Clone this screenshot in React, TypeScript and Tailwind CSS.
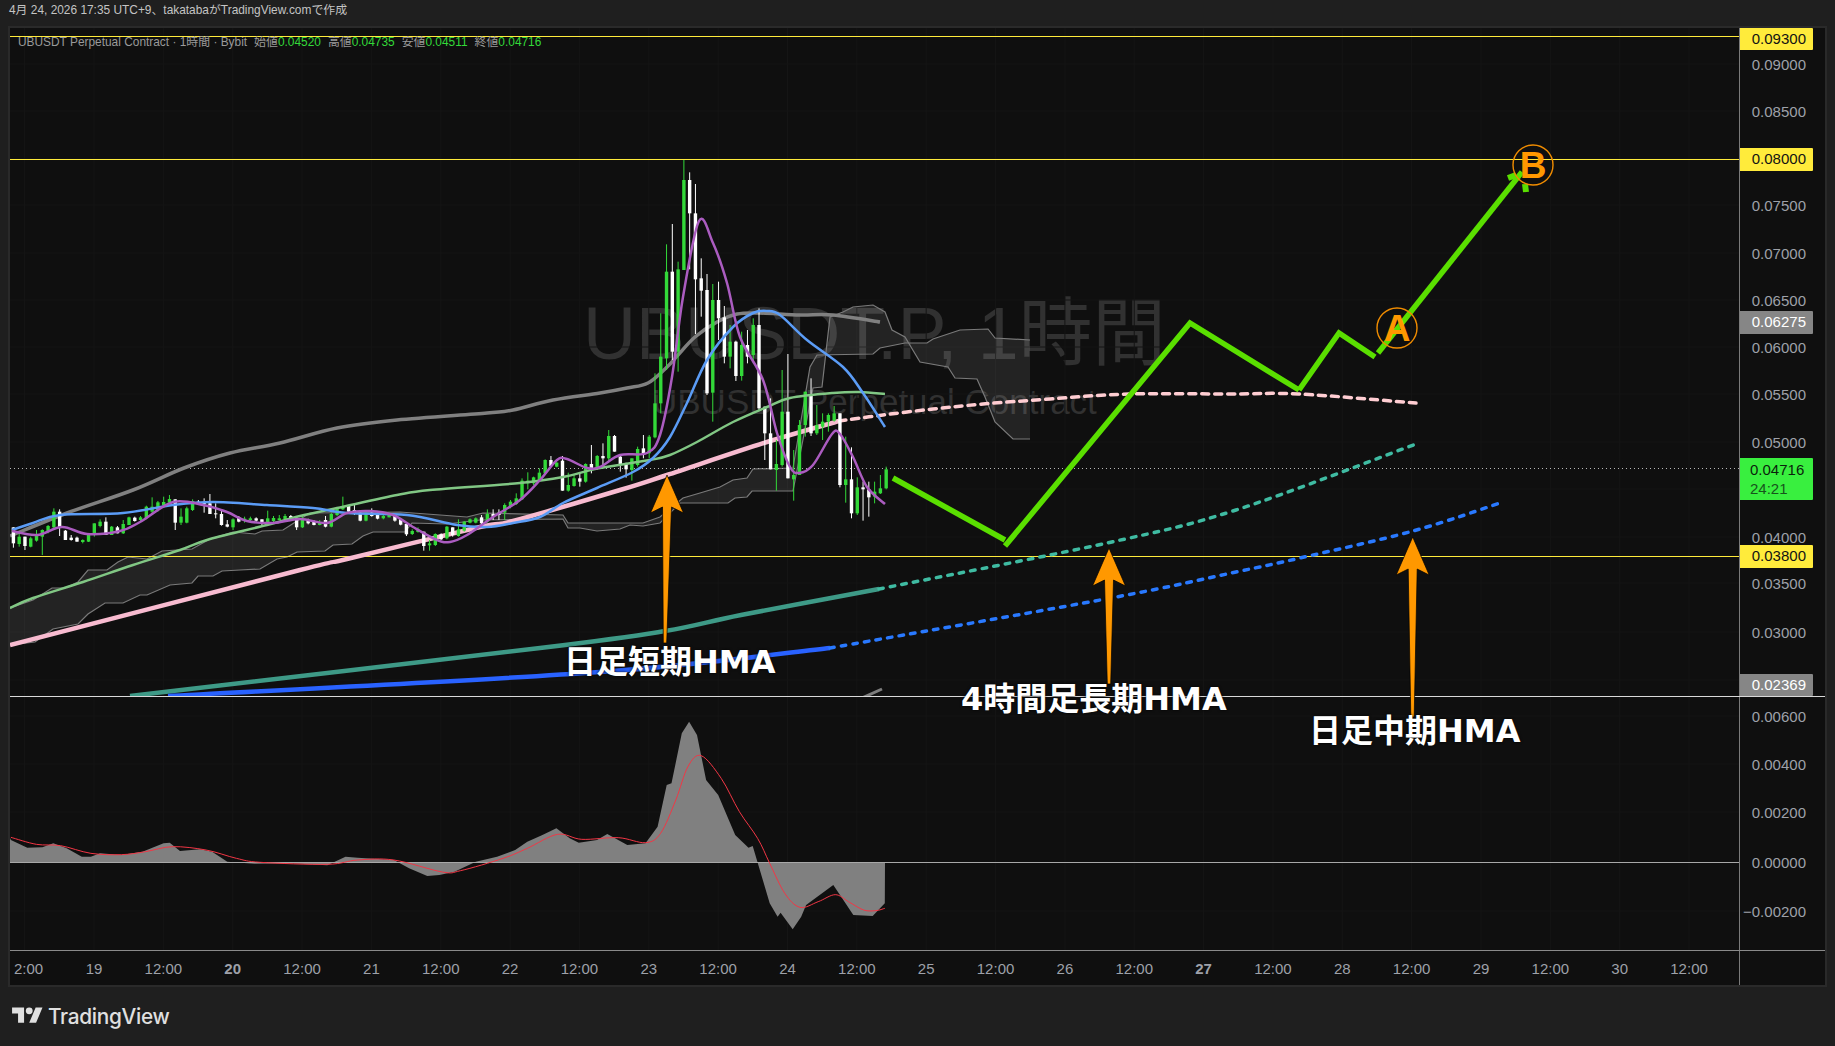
const sans = "font-['Liberation_Sans','Noto_Sans_CJK_JP',sans-serif]";
const note = "pointer-events-none absolute whitespace-nowrap font-['DejaVu_Sans','Noto_Sans_CJK_JP',sans-serif] text-[32px] font-bold leading-[44px] text-white [text-shadow:0_0_3px_#000]";

type P = [number, number];
const pts = (a: P[]) => a.map((p) => p.join(",")).join(" ");
const smooth = (a: P[]) => {
  let d = `M${a[0][0]} ${a[0][1]}`;
  for (let i = 0; i < a.length - 1; i++) {
    const p0 = a[Math.max(i - 1, 0)];
    const p1 = a[i];
    const p2 = a[i + 1];
    const p3 = a[Math.min(i + 2, a.length - 1)];
    const c1x = p1[0] + (p2[0] - p0[0]) / 6;
    const c1y = p1[1] + (p2[1] - p0[1]) / 6;
    const c2x = p2[0] - (p3[0] - p1[0]) / 6;
    const c2y = p2[1] - (p3[1] - p1[1]) / 6;
    d += `C${c1x.toFixed(1)} ${c1y.toFixed(1)} ${c2x.toFixed(1)} ${c2y.toFixed(1)} ${p2[0]} ${p2[1]}`;
  }
  return d;
};

// candles: up(1)/down(0), body top, body bottom, wick top, wick bottom
const c1: number[][] = [
[0,262,310,262,323],[1,290,312,280,320],[0,290,318,290,330],[1,295,320,290,322],[1,287,302,270,305],[1,270,290,268,345],[1,258,275,255,280],[1,215,262,205,265],[0,215,262,208,288],[0,272,300,270,300],
[0,293,300,285,302],[0,293,305,290,305],[1,300,306,298,310],[1,285,305,283,306],[1,250,285,250,290],[1,245,258,238,262],[0,245,285,232,285],[1,260,285,258,285],[0,262,280,258,280],[1,252,280,240,282],
[1,232,255,230,255],[0,233,243,230,245],[1,232,240,228,245],[1,200,235,197,238],[1,200,215,172,220],[1,187,210,183,215],[1,186,195,170,198],[1,177,188,165,190],[0,178,248,178,270],[1,230,248,205,255],
[1,205,248,200,250],[1,183,210,178,213],[0,185,193,180,195],[0,188,193,175,218],[0,190,222,162,222],[0,220,222,190,235],[0,222,255,210,257],[0,253,260,240,262],[1,238,262,235,270],[0,232,245,228,247],
[1,236,240,230,248],[1,235,240,230,245],[0,235,242,232,245],[0,238,252,238,260],[1,235,248,212,250],[1,234,243,228,248],[1,235,240,225,240],[1,228,237,222,240],[0,228,235,225,238],[0,234,262,228,270],
[1,240,262,228,264],[0,240,250,236,253],[0,245,255,240,256],[1,248,255,240,256],[0,240,260,228,262],[1,222,260,218,262],[1,205,225,203,228],[1,200,208,170,210],[0,198,215,195,222],[0,210,222,195,225],
[0,218,242,212,244],[1,218,242,216,244],[0,218,228,205,230],[0,225,236,218,238],[1,228,235,220,238],[1,222,232,218,232],[0,225,242,222,245],[0,237,254,235,256],[0,252,283,250,288],[1,273,282,268,285],
[1,268,276,262,278],[0,275,318,275,332],[1,310,316,300,332],[1,282,315,280,318],[0,283,298,280,300],[1,260,295,258,298],[0,262,285,262,290],[1,268,288,238,290],[1,245,272,243,275],[1,238,248,235,250],
[1,235,248,232,250],[0,232,250,225,255],[1,222,245,208,248],[0,222,230,208,240],[0,218,225,208,240],[1,195,218,190,240],[1,185,200,180,205],[1,175,192,160,195],[1,122,178,115,180],[1,122,130,97,148],
[1,112,130,110,135],[1,98,120,85,122],[1,60,100,58,102],[0,60,78,48,80],[1,68,80,65,82],[0,62,152,48,152],[1,135,152,98,155],[1,115,138,105,140],[0,115,125,100,140],[1,72,125,70,128],
[0,72,85,15,100],[1,48,85,45,90],
];
const c2: number[][] = [
[0,918,925,880,955],[1,858,925,840,935],[0,858,905,855,905],[0,920,945,918,965],[0,940,958,938,983],[1,925,960,925,992],[1,897,945,890,950],[0,895,912,855,925],[1,860,910,855,925],[1,760,862,670,865],
[1,620,760,490,790],[1,365,625,283,660],[0,365,605,222,630],[1,358,605,335,665],[1,90,360,30,360],[0,90,190,67,358],[0,190,388,102,552],[0,385,422,325,500],[0,420,730,372,735],[1,450,728,402,815],
[0,450,505,395,570],[0,502,620,468,640],[1,575,620,525,655],[0,575,678,572,693],[1,585,678,545,692],[0,585,620,540,640],[1,525,615,505,640],[0,525,775,475,780],[0,770,850,770,930],[0,850,958,745,958],
[1,942,960,870,1022],[1,785,945,660,950],[0,785,985,612,985],[1,975,988,900,1052],[1,825,975,810,975],[1,725,825,725,860],[0,732,850,685,858],[1,825,850,765,855],[1,815,830,790,870],[1,795,815,790,845],
[1,790,812,768,815],[0,790,1005,790,1012],[1,988,1005,860,1058],[0,988,1090,892,1105],[1,1012,1090,982,1095],[0,1012,1018,995,1112],[0,1018,1042,995,1100],[1,1025,1040,995,1060],[1,1015,1030,975,1032],[1,958,1015,950,1018],
];
const candles = [
  ...c1.map((c) => [c[0], 440 + c[1] / 3, 440 + c[2] / 3, 440 + c[3] / 3, 440 + c[4] / 3]),
  ...c2.map((c) => [c[0], 150 + c[1] / 3, 150 + c[2] / 3, 150 + c[3] / 3, 150 + c[4] / 3]),
];

const gray: P[] = [[10,536],[67,513],[133,490],[184,468],[230,453],[280,443],[337,428],[397,420],[487,413],[513,410],[553,400],[600,393],[627,388],[648,383],[667,367],[678,355],[695,337],[717,322],[737,314],[760,313],[800,315],[833,315],[880,322]];
const pink: P[] = [[10,645],[300,570],[347,559],[480,527],[513,521],[620,490],[667,475],[767,442],[839,421]];
const pinkD: P[] = [[839,421],[883,415],[933,409],[983,404],[1050,399],[1129,394],[1229,394],[1299,394],[1416,403]];
const lgreen: P[] = [[10,608],[33,598],[83,582],[133,565],[180,550],[210,539],[267,525],[300,516],[337,508],[397,495],[430,490],[520,483],[563,477],[600,468],[650,460],[670,455],[697,442],[733,422],[767,407],[790,398],[833,393],[860,392],[885,394]];
const blue: P[] = [[12,530],[33,523],[60,515],[123,513],[173,505],[213,502],[267,505],[313,508],[347,513],[407,515],[457,525],[487,527],[513,523],[540,517],[563,503],[597,488],[633,472],[653,458],[670,437],[687,403],[707,360],[733,327],[753,313],[767,311],[780,315],[807,340],[843,367],[863,393],[885,427]];
const purple: P[] = [[12,531],[37,535],[62,527],[87,534],[120,531],[140,522],[173,502],[203,505],[227,512],[247,521],[273,523],[300,519],[327,523],[347,513],[370,511],[393,515],[413,527],[437,540],[450,542],[467,535],[493,517],[520,500],[540,480],[557,460],[567,459],[587,468],[600,467],[620,455],[647,453],[660,435],[672,377],[683,297],[699,221],[713,243],[727,283],[740,337],[763,380],[777,433],[790,467],[799,473],[813,465],[832,434],[840,434],[853,457],[867,487],[885,504]];
const teal: P[] = [[130,696],[540,648],[665,631],[741,615],[879,589]];
const tealD: P[] = [[879,589],[1107,543],[1236,510],[1416,444]];
const hblue: P[] = [[168,696],[600,672],[830,648]];
const hblueD: P[] = [[830,648],[1111,598],[1236,572],[1300,558],[1413,531],[1500,503]];

const cloud1: P[] = [[10,608],[33,600],[52,588],[65,588],[78,582],[88,570],[107,570],[118,562],[128,557],[147,559],[162,551],[192,549],[210,539],[233,532],[255,534],[262,531],[283,530],[297,521],[310,513],[400,512],[440,515],[467,517],[483,513],[563,515],[568,523],[643,523],[660,517],[683,498],[700,493],[720,487],[733,480],[747,478],[753,469],[793,468],[810,367],[817,355],[873,354],[880,348],[905,343],[927,343],[933,339],[960,330],[988,329],[995,338],[1030,340]];
const cloud2: P[] = [[10,645],[35,642],[53,629],[78,624],[88,614],[105,603],[123,603],[140,595],[147,595],[170,585],[192,583],[198,576],[213,576],[222,571],[240,570],[260,569],[277,559],[287,557],[297,552],[325,551],[333,545],[352,544],[363,536],[373,532],[405,532],[412,523],[447,524],[480,520],[563,519],[568,528],[580,528],[597,531],[620,529],[630,525],[643,526],[660,523],[680,503],[728,503],[735,498],[747,497],[752,491],[793,491],[813,388],[822,387],[830,317],[843,312],[853,307],[873,305],[885,312],[892,330],[905,337],[920,362],[948,367],[955,378],[977,379],[985,397],[995,422],[1013,439],[1030,439]];

const oscRaw: P[] = [[18,420],[45,443],[70,442],[88,430],[110,445],[135,470],[150,470],[165,460],[200,465],[235,455],[270,430],[280,428],[297,453],[330,448],[350,455],[375,485],[420,491],[480,490],[540,496],[570,470],[590,473],[650,480],[675,505],[705,528],[725,525],[750,515],[785,485],[820,470],[850,450],[870,425],[895,405],[918,385],[940,415],[955,428],[985,420],[1002,402],[1035,435],[1065,430],[1085,380],[1100,255],[1108,250],[1125,100],[1137,65],[1150,105],[1165,240],[1185,285],[1213,405],[1235,443],[1242,438],[1270,610],[1283,650],[1288,638],[1308,688],[1322,650],[1330,615],[1375,555],[1395,610],[1408,645],[1440,648],[1460,610]];
const sigRaw: P[] = [[18,412],[60,433],[100,437],[150,460],[200,464],[240,455],[285,440],[340,450],[390,475],[430,487],[540,493],[590,480],[650,480],[730,516],[760,512],[830,475],[870,445],[920,403],[960,418],[1020,413],[1065,428],[1090,400],[1115,300],[1135,200],[1157,167],[1190,235],[1220,335],[1250,415],[1270,490],[1295,580],[1320,622],[1350,605],[1378,584],[1400,605],[1425,630],[1445,632],[1460,625]];
const oscMap = (a: P[]): P[] => a.map(([x, y]) => [Math.round(x / 0.165) / 10, 700 + y / 3]);
const osc = oscMap(oscRaw);
const sig = oscMap(sigRaw);

const mainTicks: [string, number][] = [["0.09000",64],["0.08500",111],["0.07500",205],["0.07000",253],["0.06500",300],["0.06000",347],["0.05500",394],["0.05000",442],["0.04000",537],["0.03500",583],["0.03000",632]];
const oscTicks: [string, number][] = [["0.00600",716],["0.00400",764],["0.00200",812],["0.00000",862],["−0.00200",911]];
const tags: [string, number, number, string, string][] = [
  ["0.09300",28,22,"bg-[#ffeb3b]","text-[#131313]"],
  ["0.08000",148,23,"bg-[#ffeb3b]","text-[#131313]"],
  ["0.06275",311,23,"bg-[#868686]","text-white"],
  ["0.03800",545,23,"bg-[#ffeb3b]","text-[#131313]"],
  ["0.02369",674,22,"bg-[#868686]","text-white"],
];
const times = Array.from({ length: 25 }, (_, i) => {
  const x = 24.65 + i * 69.35;
  const day = 19 + (i - 1) / 2;
  return { x, label: i % 2 === 0 ? "12:00" : String(day), bold: day === 20 || day === 27 };
});
const timeLabels = times.map((t, i) => (i === 0 ? { ...t, x: 28.5, label: "2:00" } : t));
const gridH = [64,111,159,205,253,300,347,394,442,489,537,583,632,680];
const gridO = [716,764,812,911];

function Arrow({ x, y, b, bx }: { x: number; y: number; b: number; bx: number }) {
  const p: P[] = [[x,y],[x+16.5,y+38],[x+4.5,y+32],[bx+1.7,b],[bx-1.7,b],[x-4.5,y+32],[x-16.5,y+38]];
  return <polygon points={pts(p)} fill="#ff9800" stroke="#000" strokeOpacity="0.7" strokeWidth="1" />;
}

function AxisLabel({ text, y, offset }: { text: string; y: number; offset: number }) {
  return (
    <div className="absolute right-[18px] -translate-y-1/2 text-[15px] leading-none text-[#9ea1a9]" style={{ top: y - offset }}>
      {text}
    </div>
  );
}

export default function App() {
  return (
    <div className={`flex h-[1046px] w-[1835px] flex-col overflow-hidden bg-[#1f1f1f] ${sans}`}>
      <div className="flex h-[26px] items-center pl-[9px] pb-[4px] text-[11.9px] text-[#c4c4c4]">
        4月 24, 2026 17:35 UTC+9、takatabaがTradingView.comで作成
      </div>

      <div className="relative mx-[8px] flex h-[961px] flex-col border-2 border-[#2a2a2a] bg-[#0f0f0f]">
        {/* price pane */}
        <div className="flex h-[668px]">
          <div className="relative w-[1729px] overflow-hidden">
            <div className="absolute left-[573px] top-[256px] whitespace-nowrap text-[73.5px] leading-[100px] text-[#313131]">UBUSDT.P, 1時間</div>
            <div className="absolute left-[642px] top-[352px] whitespace-nowrap text-[35px] leading-[44px] text-[#313131]">UBUSDT Perpetual Contract</div>
            <svg className="absolute inset-0 h-[668px] w-[1729px]" viewBox="10 28 1729 668">
              {times.map((t) => <line key={t.x} x1={t.x} x2={t.x} y1="28" y2="696" stroke="#151515" />)}
              {gridH.map((y) => <line key={y} x1="10" x2="1739" y1={y} y2={y} stroke="#151515" />)}
              <polygon points={pts([...cloud1, ...[...cloud2].reverse()])} fill="#fff" fillOpacity="0.085" />
              <polyline points={pts(cloud1)} fill="none" stroke="#7a7a7a" strokeWidth="1.2" />
              <polyline points={pts(cloud2)} fill="none" stroke="#7a7a7a" strokeWidth="1.2" />
              <line x1="10" x2="1739" y1="36.5" y2="36.5" stroke="#ffeb3b" />
              <line x1="10" x2="1739" y1="159.5" y2="159.5" stroke="#ffeb3b" />
              <line x1="10" x2="1739" y1="556.5" y2="556.5" stroke="#ffeb3b" />
              <line x1="10" x2="1739" y1="468.5" y2="468.5" stroke="#b8b8b8" strokeDasharray="1 3" />
              <path d={smooth(teal)} fill="none" stroke="#3e9a87" strokeWidth="4.5" />
              <path d={smooth(tealD)} fill="none" stroke="#3fbba2" strokeWidth="3.5" strokeDasharray="4.5 7.2" strokeLinecap="round" />
              <path d={smooth(hblue)} fill="none" stroke="#2962ff" strokeWidth="4.5" />
              <path d={smooth(hblueD)} fill="none" stroke="#2979ff" strokeWidth="3.5" strokeDasharray="4.5 7.2" strokeLinecap="round" />
              <polyline points="862,698 882,689" fill="none" stroke="#7d7d7d" strokeWidth="3" />
              <path d={smooth(pink)} fill="none" stroke="#f8bbd0" strokeWidth="4.5" />
              <path d={smooth(pinkD)} fill="none" stroke="#ffcdd2" strokeWidth="3.5" strokeDasharray="7 6" strokeLinecap="round" />
              <path d={smooth(gray)} fill="none" stroke="#808080" strokeWidth="3.5" />
              {candles.map((c, i) => {
                const x = 13.4 + i * 5.78;
                const col = c[0] ? "#33d939" : "#ffffff";
                return (
                  <g key={i}>
                    <line x1={x} x2={x} y1={c[3]} y2={c[4]} stroke={col} strokeWidth="1" />
                    <rect x={x - 1.7} y={c[1]} width="3.4" height={Math.max(c[2] - c[1], 1)} fill={col} />
                  </g>
                );
              })}
              <path d={smooth(lgreen)} fill="none" stroke="#81c784" strokeWidth="2.5" />
              <path d={smooth(blue)} fill="none" stroke="#5b9cf6" strokeWidth="2.5" />
              <path d={smooth(purple)} fill="none" stroke="#ab5cc0" strokeWidth="2.5" />
            </svg>
            <div className="absolute left-[8px] top-[8px] flex gap-[7px] whitespace-nowrap text-[11.9px] leading-[12px] text-[#9a9a9a]">
              <span>UBUSDT Perpetual Contract · 1時間 · Bybit</span>
              <span>始値<span className="text-[#33d939]">0.04520</span></span>
              <span>高値<span className="text-[#33d939]">0.04735</span></span>
              <span>安値<span className="text-[#33d939]">0.04511</span></span>
              <span>終値<span className="text-[#33d939]">0.04716</span></span>
            </div>
          </div>
          <div className="relative w-[85px] border-l border-[#7a7a7a]">
            {mainTicks.map(([t, y]) => <AxisLabel key={t} text={t} y={y} offset={28} />)}
            {tags.map(([t, y, h, bg, fg]) => (
              <div key={t} className={`absolute left-0 flex w-[73px] items-center justify-end rounded-r-[1px] pr-[7px] text-[15px] ${bg} ${fg}`} style={{ top: y - 28, height: h }}>
                {t}
              </div>
            ))}
            <div className="absolute left-0 top-[430px] flex h-[42px] w-[73px] flex-col justify-center rounded-r-[1px] bg-[#39ef3f] pl-[10px] text-[15px] leading-[19px] text-[#0b1f0c]">
              <span>0.04716</span>
              <span className="text-[#17541c]">24:21</span>
            </div>
          </div>
        </div>
        <div className="h-px bg-[#d9d9d9]" />

        {/* oscillator pane */}
        <div className="flex h-[253px]">
          <div className="w-[1729px]">
            <svg className="block h-[253px] w-[1729px]" viewBox="10 697 1729 253">
              {times.map((t) => <line key={t.x} x1={t.x} x2={t.x} y1="697" y2="950" stroke="#151515" />)}
              {gridO.map((y) => <line key={y} x1="10" x2="1739" y1={y} y2={y} stroke="#151515" />)}
              <polygon points={pts([[10,862],[10,838],...osc,[885,862]])} fill="#808080" />
              <line x1="10" x2="1739" y1="862.5" y2="862.5" stroke="#a8a8a8" />
              <path d={smooth(sig)} fill="none" stroke="#f23645" strokeWidth="1" />
            </svg>
          </div>
          <div className="relative w-[85px] border-l border-[#7a7a7a]">
            {oscTicks.map(([t, y]) => <AxisLabel key={t} text={t} y={y} offset={697} />)}
          </div>
        </div>
        <div className="h-px bg-[#8a8a8a]" />

        {/* time axis */}
        <div className="flex h-[34px]">
          <div className="relative w-[1729px] overflow-hidden">
            {timeLabels.map((t) => (
              <span key={t.x} className={`absolute top-[17px] -translate-x-1/2 -translate-y-1/2 text-[15px] leading-none text-[#9ea1a9] ${t.bold ? "font-bold" : ""}`} style={{ left: t.x - 10 }}>
                {t.label}
              </span>
            ))}
          </div>
          <div className="w-[85px] border-l border-[#7a7a7a]" />
        </div>

        {/* drawings */}
        <svg className="pointer-events-none absolute left-0 top-0 h-[922px] w-[1729px]" viewBox="10 28 1729 922">
          <g stroke="#5adf00" strokeWidth="5.5" fill="none">
            <polyline points="893,478 1005,540" />
            <polyline points="1005,546 1190,323 1299,390" />
            <polyline points="1299,390 1339,333 1375,357" />
            <polyline points="1378,353 1522,172" />
            <line x1="1508" y1="178" x2="1516" y2="175" strokeWidth="6" />
            <line x1="1525" y1="184" x2="1526" y2="192" strokeWidth="6" />
          </g>
          <Arrow x={667} y={475} b={643} bx={665} />
          <Arrow x={1109} y={548} b={684} bx={1109} />
          <Arrow x={1412.7} y={537} b={717} bx={1412.5} />
          <circle cx="1397" cy="328" r="20" fill="none" stroke="#f08c00" strokeWidth="1.4" />
          <circle cx="1533" cy="165" r="20" fill="none" stroke="#f08c00" strokeWidth="1.4" />
          <text x="1397" y="341" textAnchor="middle" fontSize="37" fontFamily="Liberation Sans" fontWeight="700" fill="#ff9800">A</text>
          <text x="1533" y="178" textAnchor="middle" fontSize="37" fontFamily="Liberation Sans" fontWeight="700" fill="#ff9800">B</text>
        </svg>
        <div className={`${note} left-[554px] top-[612px]`}>日足短期HMA</div>
        <div className={`${note} left-[951px] top-[649px]`}>4時間足長期HMA</div>
        <div className={`${note} left-[1299px] top-[681px]`}>日足中期HMA</div>
      </div>

      <div className="flex flex-1 items-center gap-[5px] pl-[12px]">
        <svg width="31" height="24" viewBox="0 0 36 28" fill="#e0e0e0" className="mb-[1px]">
          <path d="M14 22H7V11H0V4h14v18zM28 22h-8l7.5-18h8L28 22z" />
          <circle cx="20" cy="8" r="4" />
        </svg>
        <span className="font-['Inter'] text-[20.8px] font-medium tracking-[-0.3px] text-[#e0e0e0]">TradingView</span>
      </div>
    </div>
  );
}
